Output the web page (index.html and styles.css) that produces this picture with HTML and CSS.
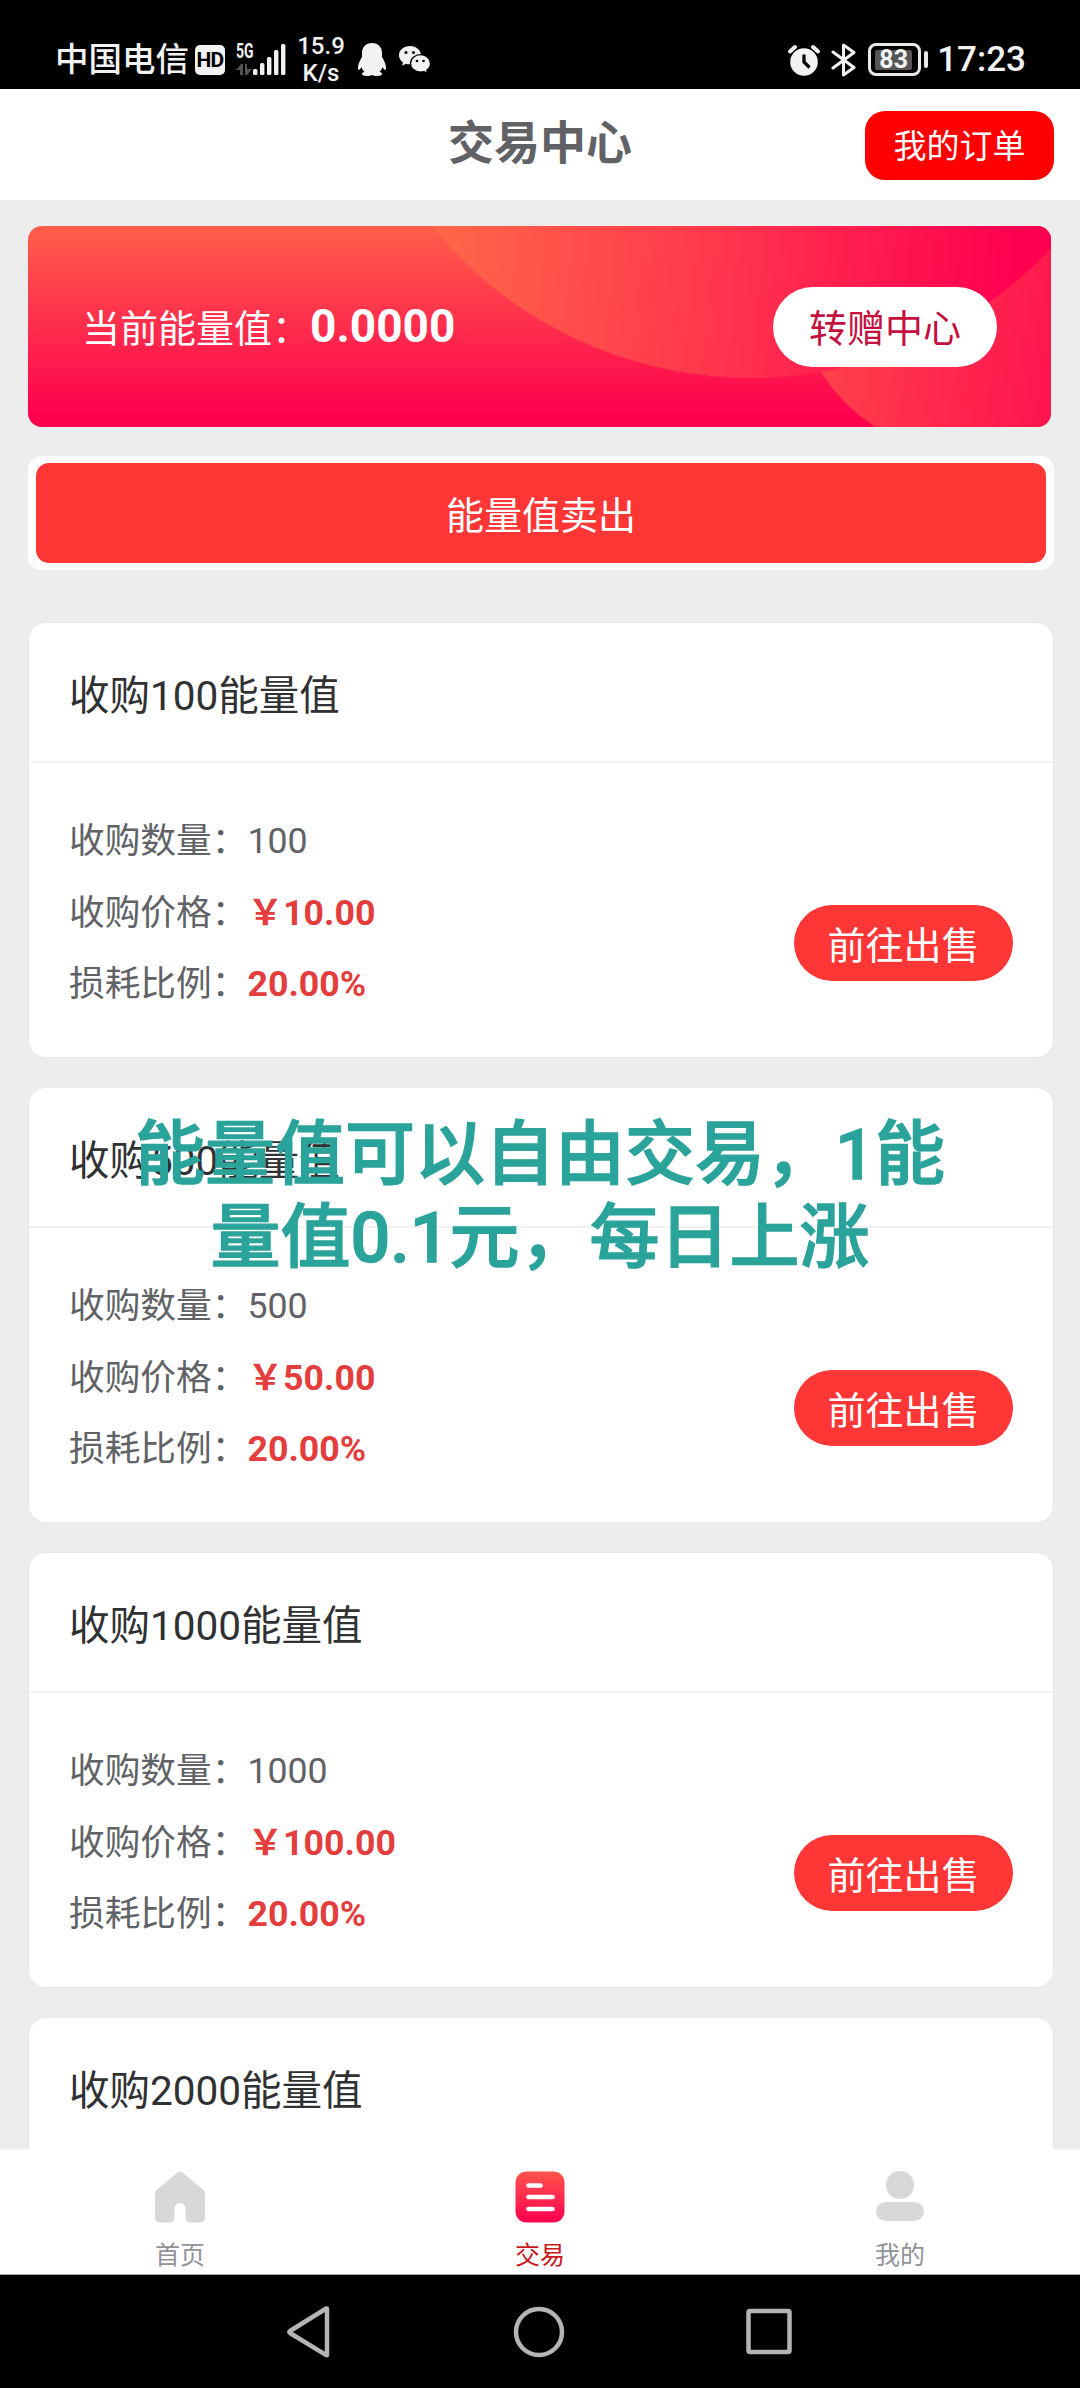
FILE: index.html
```html
<!DOCTYPE html>
<html lang="zh-CN">
<head>
<meta charset="utf-8">
<title>交易中心</title>
<link rel="stylesheet" href="styles.css">
</head>
<body>
<div class="screen">
  <div class="status">
    <span class="carrier">中国电信</span>
    <span class="hd">HD</span>
    <div class="signal">
      <div class="net"><span class="gen">5G</span>
        <svg width="16" height="12" viewBox="0 0 16 12" fill="#555"><path d="M0 6 5 0h2v11H4V6zM9 0h2v5h5l-5 6H9z"/></svg>
      </div>
      <svg width="33" height="32" viewBox="0 0 33 32" fill="#f2f2f2"><rect x="0" y="25" width="4.4" height="6" rx="1.5"/><rect x="7" y="19" width="4.4" height="12" rx="1.5"/><rect x="14" y="13" width="4.4" height="18" rx="1.5"/><rect x="21" y="6" width="4.4" height="25" rx="1.5"/><rect x="28" y="0" width="4.4" height="31" rx="1.5"/></svg>
    </div>
    <div class="speed"><span>15.9</span><span>K/s</span></div>
    <svg class="qq" width="28" height="33" viewBox="0 0 28 33" fill="#f2f2f2"><path d="M14 0C7.500 0 4 4.500 4 10v4C1.500 18 0 21.500 0 24.500c0 1.500.3 2.500.8 2.500.8 0 2-1.500 2.800-3 .4 2 1.400 3.600 2.800 4.800C4.800 29.300 4 30 4 31c0 1.300 2 2 5 2 2.300 0 4-.5 5-1 1 .5 2.700 1 5 1 3 0 5-.7 5-2 0-1-.8-1.700-2.400-2.200 1.400-1.200 2.400-2.800 2.800-4.800.8 1.500 2 3 2.800 3 .5 0 .8-1 .8-2.500 0-3-1.500-6.500-4-10.500v-4C24 4.500 20.500 0 14 0z"/></svg>
    <svg class="wechat" width="32" height="28" viewBox="0 0 32 28"><path fill="#f2f2f2" d="M11 0C4.900 0 0 4 0 9.200c0 3 1.500 5.500 4 7.200l-1 3.400 4-2c1.300.4 2.600.5 4 .5 6 0 11-4 11-9.100S17 0 11 0z"/><circle cx="7" cy="6.500" r="1.500"/><circle cx="14.500" cy="6.500" r="1.500"/><path fill="#f2f2f2" stroke="#000" stroke-width="1.300" d="M21.500 8.700c-5.600 0-10 3.800-10 8.700s4.400 8.700 10 8.700c1.300 0 2.500-.2 3.600-.5l3.600 1.900-1-3.200c2.400-1.700 3.800-4.100 3.800-6.900 0-4.900-4.500-8.700-10-8.700z"/><circle cx="18" cy="15" r="1.300"/><circle cx="24.500" cy="15" r="1.300"/></svg>
    <div class="status-right">
      <svg width="32" height="32" viewBox="0 0 32 32"><circle cx="16" cy="18" r="13.800" fill="#f2f2f2"/><path d="M2 7.500 7 3M30 7.500 25 3" stroke="#f2f2f2" stroke-width="4" stroke-linecap="round"/><path d="M16 10.500V18l5.500 5.500" fill="none" stroke="#000" stroke-width="3.200"/></svg>
      <svg class="bt" width="26" height="34" viewBox="0 0 26 34" fill="none" stroke="#f2f2f2" stroke-width="3" stroke-linejoin="round" stroke-linecap="round"><path d="M2 9 23 24.500 12.500 32V2L23 9.500 2 25"/></svg>
      <div class="battery"><span class="cell"><b>83</b></span><i class="tip"></i></div>
      <span class="clock">17:23</span>
    </div>
  </div>

  <header class="header">
    <h1 class="title">交易中心</h1>
    <button class="orders">我的订单</button>
  </header>

  <main class="content">
    <section class="banner">
      <svg class="banner-art" width="1023" height="201" viewBox="0 0 1023 201">
        <defs>
          <linearGradient id="arc" gradientUnits="userSpaceOnUse" x1="400" y1="0" x2="985" y2="60"><stop offset="0" stop-color="#ff6848"/><stop offset=".5" stop-color="#ff364d"/><stop offset="1" stop-color="#ff0050"/></linearGradient>
          <linearGradient id="ball" gradientUnits="userSpaceOnUse" x1="790" y1="100" x2="1023" y2="140"><stop offset="0" stop-color="#ff4249"/><stop offset="1" stop-color="#ff154f"/></linearGradient>
        </defs>
        <circle cx="942" cy="54" r="175" fill="url(#ball)"/>
        <ellipse cx="723" cy="-258" rx="411" ry="410" fill="url(#arc)"/>
      </svg>
      <p class="balance">当前能量值：<strong>0.0000</strong></p>
      <button class="transfer">转赠中心</button>
    </section>

    <div class="sell-wrap"><button class="sell">能量值卖出</button></div>

    <section class="card">
      <h2>收购100能量值</h2>
      <div class="card-body">
        <ul>
          <li>收购数量：<span>100</span></li>
          <li>收购价格：<b>￥10.00</b></li>
          <li>损耗比例：<b>20.00%</b></li>
        </ul>
        <button class="go">前往出售</button>
      </div>
    </section>
    <section class="card">
      <h2>收购500能量值</h2>
      <div class="card-body">
        <ul>
          <li>收购数量：<span>500</span></li>
          <li>收购价格：<b>￥50.00</b></li>
          <li>损耗比例：<b>20.00%</b></li>
        </ul>
        <button class="go">前往出售</button>
      </div>
    </section>
    <section class="card">
      <h2>收购1000能量值</h2>
      <div class="card-body">
        <ul>
          <li>收购数量：<span>1000</span></li>
          <li>收购价格：<b>￥100.00</b></li>
          <li>损耗比例：<b>20.00%</b></li>
        </ul>
        <button class="go">前往出售</button>
      </div>
    </section>
    <section class="card">
      <h2>收购2000能量值</h2>
      <div class="card-body"></div>
    </section>
  </main>

  <nav class="tabs">
    <a class="tab">
      <svg width="50" height="52" viewBox="0 0 50 52"><path fill="#d8d8d8" d="M22.500 1.500q2.500-2 5 0L48 18.500q2 1.700 2 4V46q0 5.500-5.500 5.500h-9q-5 0-5-5V37.500a5.500 5.500 0 0 0-11 0v9q0 5-5 5h-9Q0 51.500 0 46V22.500q0-2.300 2-4z"/></svg>
      <span>首页</span>
    </a>
    <a class="tab active">
      <svg width="50" height="52" viewBox="0 0 50 52"><defs><linearGradient id="trade" x2="0" y2="1"><stop offset="0" stop-color="#ff554b"/><stop offset="1" stop-color="#ff0050"/></linearGradient></defs><rect x=".5" y=".5" width="49" height="51" rx="11" fill="url(#trade)"/><path d="M13.500 14.500h12M13.500 26h24M13.500 38h24" stroke="#fff" stroke-width="4.600" stroke-linecap="round"/></svg>
      <span>交易</span>
    </a>
    <a class="tab">
      <svg width="50" height="52" viewBox="0 0 50 52" fill="#d8d8d8"><circle cx="25" cy="14" r="14"/><rect x="1" y="31" width="48" height="19" rx="9.500"/></svg>
      <span>我的</span>
    </a>
  </nav>

  <div class="sysnav">
    <svg width="46" height="54" viewBox="0 0 46 54"><path d="M41 4v46q0 .5-.8.1L4 28q-1.500-1 0-2L40.200 3.500q.8-.2.8.5z"/></svg>
    <svg width="54" height="54" viewBox="0 0 54 54"><circle cx="27" cy="27" r="23"/></svg>
    <svg width="48" height="54" viewBox="0 0 48 54"><rect x="3.500" y="6" width="41" height="41" rx="1.500"/></svg>
  </div>

  <p class="caption">能量值可以自由交易，1能<br>量值0.1元，每日上涨</p>
</div>
</body>
</html>
```
FILE: styles.css
```css
* { box-sizing: border-box; margin: 0; padding: 0; }
body { background: #ededed; font-family: Roboto, "Noto Sans CJK SC", sans-serif; }
button { border: 0; font-family: inherit; color: #fff; white-space: nowrap; }
svg { display: block; flex: none; }
ul { list-style: none; }

.screen { position: relative; display: flex; flex-direction: column; width: 1080px; height: 2388px; overflow: hidden; background: #ededed; }

/* Phone status bar */
.status { display: flex; align-items: center; flex: none; height: 89px; padding: 30px 54px 0 55px; background: #000; color: #f2f2f2; }
.carrier { width: 140px; padding-top: 1px; font-size: 33.500px; font-weight: 500; line-height: 40px; }
.hd { width: 30px; height: 30px; border-radius: 5px; background: #f2f2f2; color: #000; font-size: 21px; font-weight: 700; line-height: 31px; text-align: center; letter-spacing: -.8px; }
.signal { display: flex; align-items: flex-start; margin-left: 11px; }
.net { display: flex; flex-direction: column; gap: 5px; width: 17px; }
.gen { width: 24px; font-size: 20px; font-weight: 700; line-height: 15px; transform: scaleX(.7); transform-origin: left; }
.speed { display: flex; flex-direction: column; width: 48px; margin-left: 11px; font-size: 24px; font-weight: 500; line-height: 27px; text-align: center; }
.qq { margin-left: 13px; }
.wechat { margin-left: 13px; }
.status-right { display: flex; align-items: center; margin-left: auto; }
.bt { margin-left: 11px; }
.battery { display: flex; align-items: center; gap: 3px; margin-left: 11px; }
.cell { display: flex; width: 53px; height: 33px; padding: 4px; border: 3px solid #e8e8e8; border-radius: 8px; }
.cell b { width: 37px; height: 20px; background: #555; border-radius: 2px; font-size: 25px; font-weight: 700; line-height: 20px; text-align: center; }
.tip { width: 4px; height: 17px; border-radius: 2px; background: #e8e8e8; }
.clock { margin-left: 9px; font-size: 35px; font-weight: 500; line-height: 40px; }

/* Page header */
.header { display: grid; grid-template-columns: 1fr auto 1fr; flex: none; height: 111px; padding: 22px 26px 0; background: #fff; }
.title { grid-column: 2; color: #606266; font-size: 46px; font-weight: 700; line-height: 64px; }
.orders { justify-self: end; width: 189px; height: 69px; padding-top: 2px; border-radius: 20px; background: #f00; font-size: 33px; line-height: 68px; }

.content { flex: 1; min-height: 0; overflow: hidden; padding: 26px 26px 0 28px; }

/* Balance banner */
.banner { position: relative; display: flex; align-items: center; justify-content: space-between; width: 1023px; height: 201px; padding: 0 54px 0 54px; overflow: hidden; border-radius: 14px; background: linear-gradient(#ff5f4a, #ff004e 95%); color: #fff; }
.banner-art { position: absolute; inset: 0; }
.balance { position: relative; padding-top: 2px; font-size: 38px; line-height: 60px; }
.balance strong { font-size: 46px; font-weight: 700; }
.transfer { position: relative; width: 224px; height: 80px; padding-bottom: 2px; border-radius: 40px; background: #fff; color: #c4103e; font-size: 38px; }

.sell-wrap { height: 114px; margin-top: 29px; padding: 7px 8px; border-radius: 13px; background: #fff; }
.sell { width: 100%; height: 100px; padding-bottom: 2px; border-radius: 13px; background: #fe3635; font-size: 38px; }

/* Purchase cards */
.card { height: 436px; margin: 0 0 29px 0; border: 1px solid #e9e9eb; border-radius: 18px; background: #fff; }
.sell-wrap + .card { margin-top: 52px; }
.card h2 { height: 140px; padding-left: 40px; border-bottom: 2px solid #f2f2f4; color: #303133; font-size: 40.500px; font-weight: 400; line-height: 146px; }
.card-body { display: flex; justify-content: space-between; align-items: flex-start; padding: 43px 40px 0 40px; }
.card li { height: 71.500px; color: #606266; font-size: 35.700px; line-height: 71.500px; }
.card li b { color: #e43d3d; font-weight: 700; }
.go { width: 219px; height: 76px; margin-top: 99px; padding-bottom: 2px; border-radius: 38px; background: #fe3635; font-size: 38px; }

/* Tab bar */
.tabs { display: flex; flex: none; height: 126px; padding: 0; background: #fff; border-bottom: 1px solid #aaa; }
.tab { display: flex; flex: 1; flex-direction: column; align-items: center; padding-top: 22px; color: #909399; font-size: 25px; line-height: 36px; }
.tab span { margin-top: 15px; }
.tab.active { color: #c8161d; }

/* System navigation */
.sysnav { display: flex; flex: none; align-items: center; justify-content: space-between; height: 113px; padding: 0 287px 0 286px; background: #000; }
.sysnav svg { fill: none; stroke: #b4b4b4; stroke-width: 4.500; stroke-linejoin: round; }

/* Floating caption above the page */
.caption { position: absolute; top: 1114px; left: 0; width: 1080px; color: #2aa39b; font-size: 70px; font-weight: 500; line-height: 83px; text-align: center; -webkit-text-stroke: 1.300px #2aa39b; }
```
